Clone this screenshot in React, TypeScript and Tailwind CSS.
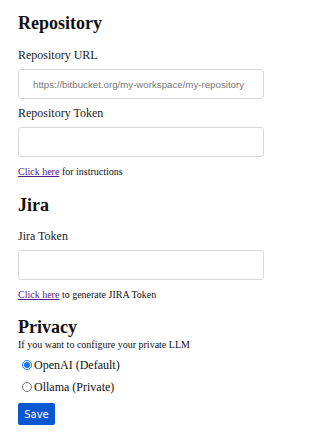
import { useState } from "react";

function Field({ label, placeholder }: { label: string; placeholder?: string }) {
  return (
    <div className="flex flex-col">
      <label className="text-[12px] leading-[16px] text-[#222]">{label}</label>
      <input
        type="text"
        placeholder={placeholder}
        className="mt-[6px] h-[30px] w-[246px] rounded-[3px] border border-[#d9d9d9] bg-white px-[14px] font-['Liberation_Sans',sans-serif] text-[9.7px] text-[#333] placeholder:text-[#777] focus:outline-none"
      />
    </div>
  );
}

export default function App() {
  const [llm, setLlm] = useState("openai");

  return (
    <div className="min-h-screen bg-white px-[18px] pt-[11px] font-['Liberation_Serif',serif] text-[#111]">
      <h2 className="text-[18px] font-bold leading-[24px]">Repository</h2>

      <div className="mt-[12px]">
        <Field label="Repository URL" placeholder="https://bitbucket.org/my-workspace/my-repository" />
      </div>
      <div className="mt-[6px]">
        <Field label="Repository Token" />
      </div>
      <p className="mt-[9px] text-[10px] leading-[12px]">
        <a href="#" className="text-[#551a8b] underline">Click here</a> for instructions
      </p>

      <h2 className="mt-[15px] text-[18px] font-bold leading-[24px]">Jira</h2>
      <div className="mt-[11px]">
        <Field label="Jira Token" />
      </div>
      <p className="mt-[9px] text-[10px] leading-[12px]">
        <a href="#" className="text-[#551a8b] underline">Click here</a> to generate JIRA Token
      </p>

      <h2 className="mt-[14px] text-[18px] font-bold leading-[24px]">Privacy</h2>
      <p className="text-[10px] leading-[12px]">If you want to configure your private LLM</p>

      <div className="mt-[6px] flex flex-col gap-[6px] pl-[4px] text-[12px] leading-[16px]">
        <label className="flex items-center gap-[2px]">
          <input
            type="radio"
            name="llm"
            checked={llm === "openai"}
            onChange={() => setLlm("openai")}
            className="m-0 h-[10px] w-[10px] accent-[#1a73e8]"
          />
          OpenAI (Default)
        </label>
        <label className="flex items-center gap-[2px]">
          <input
            type="radio"
            name="llm"
            checked={llm === "ollama"}
            onChange={() => setLlm("ollama")}
            className="m-0 h-[10px] w-[10px] accent-[#1a73e8]"
          />
          Ollama (Private)
        </label>
      </div>

      <button className="mt-[8px] h-[22px] w-[37px] rounded-[2px] bg-[#0b57d0] font-['DejaVu_Sans',sans-serif] text-[10px] text-white">
        Save
      </button>
    </div>
  );
}
